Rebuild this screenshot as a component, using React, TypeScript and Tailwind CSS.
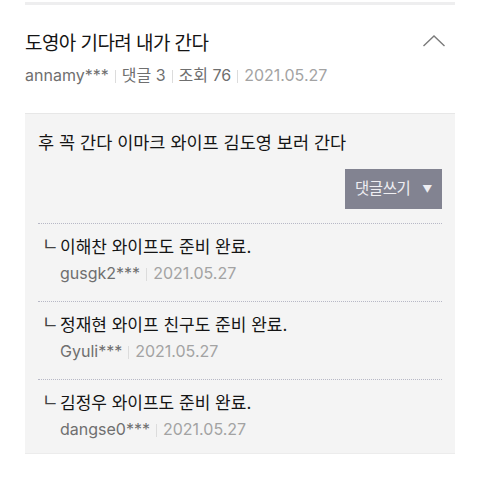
const FONT = "font-['Inter','Noto_Sans_CJK_KR',sans-serif]";

const comments = [
  { text: '이해찬 와이프도 준비 완료.', user: 'gusgk2***', date: '2021.05.27' },
  { text: '정재현 와이프 친구도 준비 완료.', user: 'Gyuli***', date: '2021.05.27' },
  { text: '김정우 와이프도 준비 완료.', user: 'dangse0***', date: '2021.05.27' },
];

function Sep() {
  return <span className="inline-block w-px h-[13px] bg-[#dcdcdc] mx-[6px] translate-y-[1px]" />;
}

export default function App() {
  return (
    <div className={`w-[480px] h-[482px] bg-white px-[25px] ${FONT}`}>
      <div className="h-[2px]" />
      <div className="h-[3px] bg-[#eeeeef]" />

      <div className="pt-[27px] pb-[28px]">
        <div className="flex items-center justify-between">
          <h1 className="text-[19px] leading-[24px] text-[#141414] tracking-[-0.03em]">도영아 기다려 내가 간다</h1>
          <svg width="24" height="14" viewBox="0 0 24 14" className="mr-[9px] mt-[-6px]">
            <path d="M1.5 12 L12 2 L22.5 12" fill="none" stroke="#7a7a7a" strokeWidth="1.4" />
          </svg>
        </div>
        <div className="mt-[9px] flex items-center text-[16px] leading-[20px]">
          <span className="text-[#6f6f6f]">annamy***</span>
          <Sep />
          <span className="text-[#6f6f6f]">댓글 3</span>
          <Sep />
          <span className="text-[#6f6f6f]">조회 76</span>
          <Sep />
          <span className="text-[#a3a3a3]">2021.05.27</span>
        </div>
      </div>

      <div className="border-t border-[#e7e7e7] bg-[#f4f4f4] px-[13px] border-b border-b-[#ececec]">
        <p className="pt-[17px] text-[17.5px] leading-[24px] text-[#141414]">
          후 꼭 간다 이마크 와이프 김도영 보러 간다
        </p>
        <div className="mt-[14px] flex justify-end">
          <button className="w-[97px] h-[40px] bg-[#828391] text-[#eeeef2] text-[15.5px] flex items-center justify-center gap-[12px] tracking-[-0.03em]">
            <span>댓글쓰기</span>
            <span className="text-[10px]">▼</span>
          </button>
        </div>
        <div className="mt-[14px]">
          {comments.map((c, i) => (
            <div key={i} className={`border-t border-dotted border-[#b7b8c6] pt-[11px] ${i === comments.length - 1 ? 'pb-[14px]' : 'pb-[18px]'}`}>
              <div className="flex items-center text-[17px] leading-[24px] text-[#141414]">
                <span className="w-[22px] pl-[4px] text-[18px] leading-[24px] text-[#444] -mt-[4px]">ㄴ</span>
                <span>{c.text}</span>
              </div>
              <div className="mt-[4px] pl-[22px] flex items-center text-[16px] leading-[20px]">
                <span className="text-[#6f6f6f]">{c.user}</span>
                <Sep />
                <span className="text-[#a3a3a3]">{c.date}</span>
              </div>
            </div>
          ))}
        </div>
      </div>
    </div>
  );
}
